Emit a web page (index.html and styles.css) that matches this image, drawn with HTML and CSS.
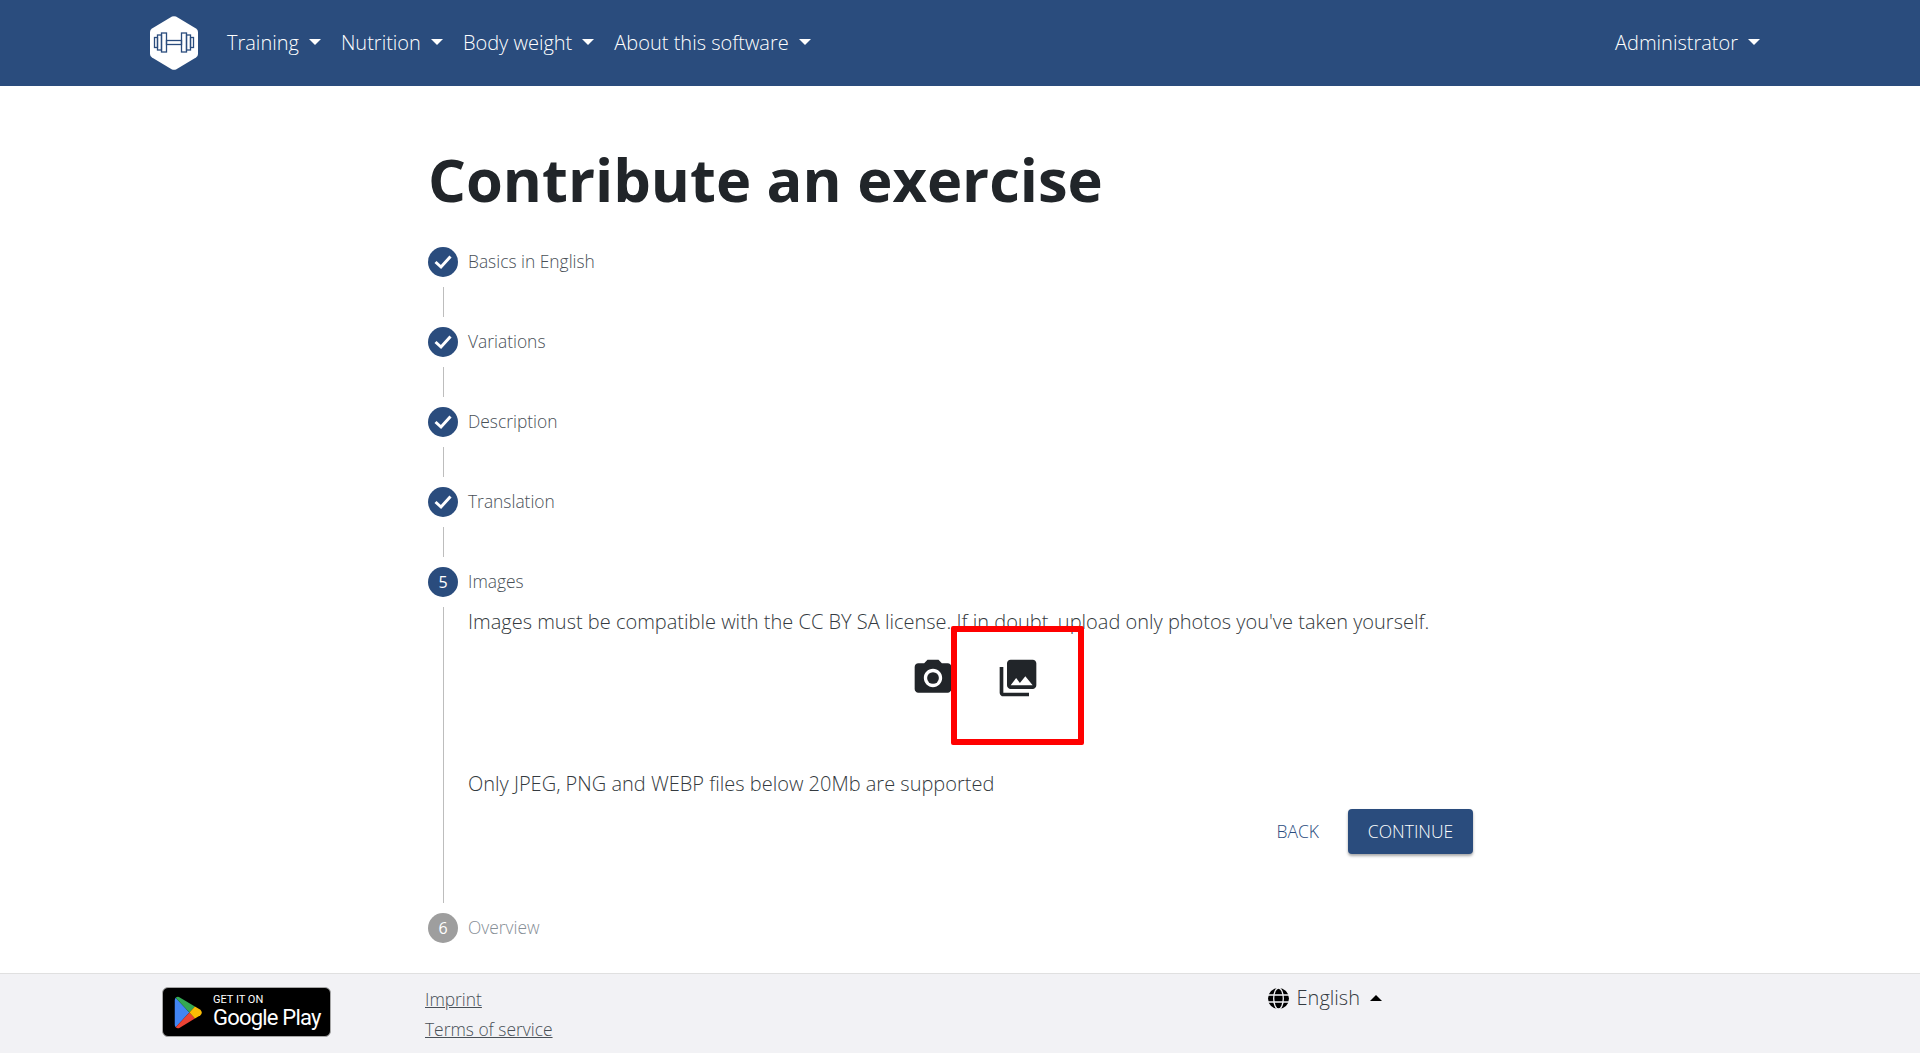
FILE: index.html
```html
<!DOCTYPE html>
<html lang="en">
<head>
    <meta charset="UTF-8">
    <meta name="viewport" content="width=device-width, initial-scale=1.0">
    <title>Contribute an exercise</title>
    <link rel="stylesheet" href="styles.css">
</head>
<body>
    <nav class="navbar">
        <svg class="logo" viewBox="0 0 48 54">
            <path d="M22 .6Q24 -.3 26 .6L46 12.500Q48 13.800 48 16V38Q48 40.200 46 41.500L26 53.400Q24 54.300 22 53.400L2 41.500Q0 40.200 0 38V16Q0 13.800 2 12.500Z" fill="#fff"/>
            <g fill="none" stroke="#2a4c7d" stroke-width="1.300">
                <rect x="4.500" y="21.500" width="3" height="10"/>
                <rect x="7.500" y="19" width="4" height="15"/>
                <rect x="11.500" y="17" width="5" height="19"/>
                <rect x="31.500" y="17" width="5" height="19"/>
                <rect x="36.500" y="19" width="4" height="15"/>
                <rect x="40.500" y="21.500" width="3" height="10"/>
                <rect x="16.500" y="24.500" width="15" height="4"/>
            </g>
        </svg>
        <a class="nav-link dropdown">Training</a>
        <a class="nav-link dropdown">Nutrition</a>
        <a class="nav-link dropdown">Body weight</a>
        <a class="nav-link dropdown">About this software</a>
        <a class="nav-link dropdown nav-user">Administrator</a>
    </nav>

    <main class="content">
        <h1>Contribute an exercise</h1>

        <div class="step">
            <span class="step-icon"><svg viewBox="0 0 24 24"><path d="M4.500 12 10 17 19.500 6.500" fill="none" stroke="#fff" stroke-width="3"/></svg></span>
            <span class="step-label">Basics in English</span>
        </div>
        <div class="connector"></div>
        <div class="step">
            <span class="step-icon"><svg viewBox="0 0 24 24"><path d="M4.500 12 10 17 19.500 6.500" fill="none" stroke="#fff" stroke-width="3"/></svg></span>
            <span class="step-label">Variations</span>
        </div>
        <div class="connector"></div>
        <div class="step">
            <span class="step-icon"><svg viewBox="0 0 24 24"><path d="M4.500 12 10 17 19.500 6.500" fill="none" stroke="#fff" stroke-width="3"/></svg></span>
            <span class="step-label">Description</span>
        </div>
        <div class="connector"></div>
        <div class="step">
            <span class="step-icon"><svg viewBox="0 0 24 24"><path d="M4.500 12 10 17 19.500 6.500" fill="none" stroke="#fff" stroke-width="3"/></svg></span>
            <span class="step-label">Translation</span>
        </div>
        <div class="connector"></div>
        <div class="step">
            <span class="step-icon">5</span>
            <span class="step-label">Images</span>
        </div>
        <div class="step-body">
            <p class="hint">Images must be compatible with the CC BY SA license. If in doubt, upload only photos you've taken yourself.</p>
            <div class="upload-icons">
                <svg class="upload-icon" viewBox="0 0 24 24"><circle cx="12" cy="12" r="3.200"/><path d="M9 2 7.170 4H4c-1.100 0-2 .9-2 2v12c0 1.100.9 2 2 2h16c1.100 0 2-.9 2-2V6c0-1.100-.9-2-2-2h-3.170L15 2H9zm3 15c-2.760 0-5-2.240-5-5s2.240-5 5-5 5 2.240 5 5-2.240 5-5 5z"/></svg>
                <span class="upload-target">
                    <svg class="upload-icon" viewBox="0 0 24 24"><path d="M22 16V4c0-1.100-.9-2-2-2H8c-1.100 0-2 .9-2 2v12c0 1.100.9 2 2 2h12c1.100 0 2-.9 2-2zm-11-4 2.030 2.710L16 11l4 5H8l3-4zM2 6v14c0 1.100.9 2 2 2h14v-2H4V6H2z"/></svg>
                    <span class="highlight"></span>
                </span>
            </div>
            <p class="hint">Only JPEG, PNG and WEBP files below 20Mb are supported</p>
            <div class="actions">
                <a class="btn-back">BACK</a>
                <a class="btn-continue">CONTINUE</a>
            </div>
        </div>
        <div class="step step-pending">
            <span class="step-icon">6</span>
            <span class="step-label">Overview</span>
        </div>
    </main>

    <footer class="footer">
        <a class="play-badge">
            <svg class="play-logo" viewBox="0 0 30 36">
                <path d="M1 2 16 18 1 34Q0 33 0 31V5Q0 3 1 2Z" fill="#4285f4"/>
                <path d="M1 2Q3 0 5.500 1.500L22 11.500 16 18Z" fill="#34a853"/>
                <path d="M1 34Q3 36 5.500 34.500L22 24.500 16 18Z" fill="#ea4335"/>
                <path d="M22 11.500 28 15Q31 18 28 21L22 24.500 16 18Z" fill="#fbbc04"/>
            </svg>
            <span class="play-text">
                <span class="play-small">GET IT ON</span>
                <span class="play-big">Google Play</span>
            </span>
        </a>
        <div class="footer-links">
            <a>Imprint</a>
            <a>Terms of service</a>
        </div>
        <div class="language">
            <svg class="globe" viewBox="0 0 21 21">
                <circle cx="10.500" cy="10.500" r="10.500" fill="#000"/>
                <g fill="none" stroke="#f2f2f5" stroke-width="1.300">
                    <ellipse cx="10.500" cy="10.500" rx="4.800" ry="10.500"/>
                    <path d="M0 7H21M0 14H21"/>
                </g>
            </svg>
            <span>English</span>
            <span class="caret-up"></span>
        </div>
    </footer>
</body>
</html>
```

FILE: styles.css
```css
* {
    margin: 0;
    padding: 0;
    box-sizing: border-box;
}

body {
    font-family: 'Open Sans', sans-serif;
    font-weight: 300;
    color: #212529;
    background: white;
    min-height: 100vh;
    display: flex;
    flex-direction: column;
}

.navbar {
    background: #2a4c7d;
    height: 86px;
    padding: 0 150px;
    display: flex;
    align-items: center;
    flex-shrink: 0;
}

.logo {
    width: 48px;
    height: 54px;
    margin-right: 29px;
}

.nav-link {
    color: white;
    font-size: 20px;
    margin-right: 20px;
    padding-bottom: 2px;
    display: flex;
    align-items: center;
}

.dropdown::after {
    content: "";
    margin-left: 10px;
    border-top: 6px solid white;
    border-left: 6px solid transparent;
    border-right: 6px solid transparent;
}

.nav-user {
    margin-left: auto;
    margin-right: 0;
    padding-right: 10px;
}

.content {
    flex: 1;
    padding: 0 447px 0 428px;
}

h1 {
    font-size: 59.600px;
    font-weight: 700;
    line-height: 72px;
    margin-top: 57px;
    margin-bottom: 32px;
}

.step {
    display: flex;
    align-items: center;
    height: 30px;
}

.step-icon {
    width: 30px;
    height: 30px;
    border-radius: 50%;
    background: #2a4c7d;
    color: white;
    font-size: 16px;
    font-weight: 400;
    display: flex;
    align-items: center;
    justify-content: center;
    flex-shrink: 0;
}

.step-icon svg {
    width: 24px;
    height: 24px;
}

.step-label {
    font-size: 17.400px;
    color: #495057;
    margin-left: 10px;
    padding-bottom: 2px;
}

.connector {
    height: 30px;
    margin: 10px 0 10px 15px;
    border-left: 1px solid #bdbdbd;
}

.step-body {
    margin: 10px 0 10px 15px;
    padding-left: 24px;
    border-left: 1px solid #bdbdbd;
    height: 296px;
}

.hint {
    font-size: 20px;
    line-height: 30px;
    color: #343a40;
}

.upload-icons {
    display: flex;
    justify-content: center;
    margin-top: 19px;
    padding-left: 10px;
    height: 113px;
    gap: 41px;
}

.upload-icon {
    width: 44px;
    height: 44px;
    fill: #212529;
    display: block;
}

.upload-target {
    position: relative;
}

.highlight {
    position: absolute;
    left: -45px;
    top: -30px;
    width: 133px;
    height: 119px;
    border: 6px solid #ff0000;
    border-radius: 2px;
}

.actions {
    display: flex;
    justify-content: flex-end;
    align-items: center;
    margin-top: 10px;
}

.btn-back {
    font-size: 17.500px;
    color: #2a4c7d;
    margin-right: 29px;
    padding-bottom: 2px;
}

.btn-continue {
    background: #2a4c7d;
    color: white;
    font-size: 17.500px;
    width: 125px;
    height: 45px;
    padding-bottom: 2px;
    border-radius: 4px;
    box-shadow: 0 2px 3px rgba(0,0,0,0.35);
    display: flex;
    align-items: center;
    justify-content: center;
}

.step-pending .step-icon {
    background: #9e9e9e;
}

.step-pending .step-label {
    color: #868e96;
}

.footer {
    height: 80px;
    flex-shrink: 0;
    background: #f2f2f5;
    border-top: 1px solid #e0e0e0;
    padding: 13px 0 0 163px;
    display: flex;
    align-items: flex-start;
}

.play-badge {
    width: 169px;
    height: 50px;
    margin-left: -1px;
    margin-right: 1px;
    background: black;
    border: 1px solid #a6a6a6;
    border-radius: 6px;
    display: flex;
    align-items: center;
    padding-left: 11px;
    color: white;
}

.play-logo {
    width: 29px;
    height: 33px;
    margin-right: 10px;
}

.play-text {
    display: flex;
    flex-direction: column;
    font-family: 'Roboto', sans-serif;
    font-weight: 400;
}

.play-small {
    font-size: 11px;
    line-height: 12px;
}

.play-big {
    font-size: 22px;
    line-height: 24px;
    letter-spacing: -0.8px;
}

.footer-links {
    margin-left: 93px;
    display: flex;
    flex-direction: column;
    gap: 6px;
    font-size: 17.400px;
    line-height: 24px;
    color: #495057;
}

.footer-links a {
    text-decoration: underline;
}

.language {
    margin-left: 715px;
    margin-top: -2px;
    display: flex;
    align-items: center;
    font-size: 20px;
    color: #343a40;
    line-height: 26px;
}

.globe {
    width: 21px;
    height: 21px;
    margin-right: 8px;
}

.caret-up {
    margin-left: 10px;
    border-bottom: 6px solid black;
    border-left: 6px solid transparent;
    border-right: 6px solid transparent;
}
```
